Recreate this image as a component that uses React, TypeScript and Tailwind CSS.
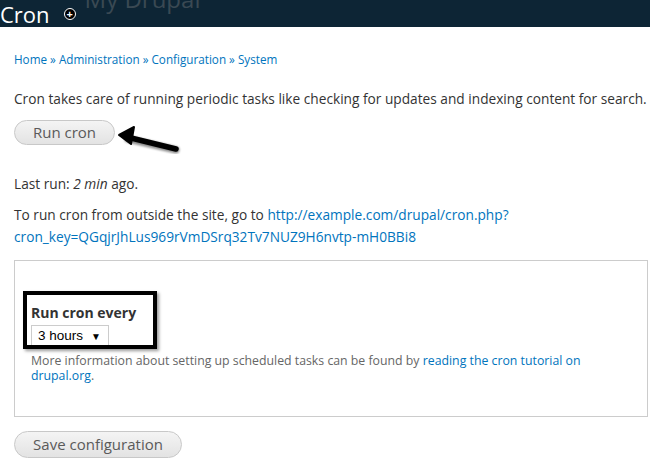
const font = { fontFamily: '"Open Sans", "DejaVu Sans", sans-serif' };

function Arrow() {
  return (
    <svg width="70" height="30" viewBox="0 0 70 30" className="absolute left-[112px] top-[124px]">
      <defs>
        <filter id="sh" x="-20%" y="-40%" width="140%" height="180%">
          <feGaussianBlur stdDeviation="1" />
        </filter>
      </defs>
      <g filter="url(#sh)" opacity="0.45">
        <path d="M64 26 L16 15" stroke="#000" strokeWidth="7" strokeLinecap="round" />
      </g>
      <path d="M64 25 L15 13" stroke="#000" strokeWidth="5.5" strokeLinecap="round" />
      <path d="M7 11 L22 3 L19 20 Z" fill="#000" stroke="#000" strokeWidth="2" strokeLinejoin="round" />
    </svg>
  );
}

export default function App() {
  return (
    <div className="relative h-[473px] w-[650px] overflow-hidden bg-white text-[13.7px] text-[#333]" style={font}>
      <div className="relative flex h-[27px] items-center overflow-hidden bg-[#0d2535]">
        <span className="text-[22px] leading-none text-white">Cron</span>
        <span className="ml-[14px] flex h-[12px] w-[12px] items-center justify-center rounded-full border border-white bg-black text-[11px] font-bold leading-none text-white">
          +
        </span>
        <span className="ml-[9px] -mt-[30px] text-[24px] leading-none text-[#3a4953]">My Drupal</span>
      </div>

      <div className="pl-[14px] pr-[2px]">
        <div className="mt-[24px] text-[11.7px] leading-[16px] text-[#0074bd]">
          Home » Administration » Configuration » System
        </div>

        <p className="mt-[22px] whitespace-nowrap leading-[19px]">
          Cron takes care of running periodic tasks like checking for updates and indexing content for search.
        </p>

        <button className="mt-[12px] h-[25px] w-[101px] rounded-full border border-[#c8c8c8] bg-gradient-to-b from-[#f4f4f4] to-[#e3e3e3] text-[15px] text-[#5a5a5a]">
          Run cron
        </button>

        <p className="mt-[29px] leading-[19px]">
          Last run: <em>2 min</em> ago.
        </p>

        <p className="mt-[11px] leading-[22px]">
          To run cron from outside the site, go to{" "}
          <span className="text-[#0074bd]">http://example.com/drupal/cron.php?</span>
          <br />
          <span className="text-[#0074bd]">cron_key=QGqjrJhLus969rVmDSrq32Tv7NUZ9H6nvtp-mH0BBi8</span>
        </p>

        <div className="mt-[12px] h-[157px] border border-[#ccc] px-[16px] pt-[43px]">
          <div className="relative">
            <div className="absolute -left-[8px] -top-[13px] h-[58px] w-[134px] border-[4px] border-black shadow-[2px_2px_3px_rgba(0,0,0,0.4)]" />
            <div className="text-[14px] font-bold leading-[18px] text-[#333]">Run cron every</div>
            <div className="mt-[3px] flex h-[22px] w-[78px] items-center justify-between border border-[#ccc] bg-white pl-[6px] pr-[7px] text-[13.5px] text-black" style={{ fontFamily: '"Liberation Sans", Arial, sans-serif' }}>
              <span>3 hours</span>
              <span className="text-[10px]">▼</span>
            </div>
            <p className="mt-[6px] w-[560px] text-[12.3px] leading-[15px] text-[#666]">
              More information about setting up scheduled tasks can be found by{" "}
              <span className="text-[#0074bd]">reading the cron tutorial on drupal.org</span>.
            </p>
          </div>
        </div>

        <button className="mt-[14px] h-[27px] w-[168px] rounded-full border border-[#c8c8c8] bg-gradient-to-b from-[#f4f4f4] to-[#e3e3e3] text-[15px] text-[#5a5a5a]">
          Save configuration
        </button>
      </div>

      <Arrow />
    </div>
  );
}
